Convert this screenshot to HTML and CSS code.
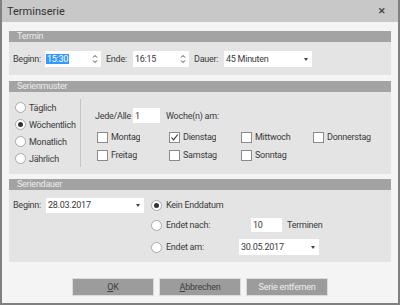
FILE: index.html
```html
<!DOCTYPE html>
<html lang="de">
<head>
    <meta charset="UTF-8">
    <title>Terminserie</title>
    <link rel="stylesheet" href="styles.css">
</head>
<body>
    <div class="window">
        <div class="titlebar">
            <span class="title">Terminserie</span>
            <span class="close">&#x2715;</span>
        </div>

        <div class="content">
            <div class="group">
                <div class="group-head">Termin</div>
                <div class="group-body termin">
                    <span class="lbl lbl-beginn">Beginn:</span>
                    <div class="field time">
                        <span class="selected">15:30</span>
                        <svg class="spin" width="6" height="10" viewBox="0 0 6 10"><path d="M1 3.5 L3 1.5 L5 3.5 M1 6.5 L3 8.5 L5 6.5" fill="none" stroke="#444" stroke-width="1"/></svg>
                    </div>
                    <span class="lbl lbl-ende">Ende:</span>
                    <div class="field time">
                        <span>16:15</span>
                        <svg class="spin" width="6" height="10" viewBox="0 0 6 10"><path d="M1 3.5 L3 1.5 L5 3.5 M1 6.5 L3 8.5 L5 6.5" fill="none" stroke="#444" stroke-width="1"/></svg>
                    </div>
                    <span class="lbl lbl-dauer">Dauer:</span>
                    <div class="field combo dauer">
                        <span>45 Minuten</span>
                        <span class="arrow"></span>
                    </div>
                </div>
            </div>

            <div class="group">
                <div class="group-head">Serienmuster</div>
                <div class="group-body muster">
                    <div class="radios">
                        <label class="radio"><span class="dot"></span>Täglich</label>
                        <label class="radio"><span class="dot on"></span>Wöchentlich</label>
                        <label class="radio"><span class="dot"></span>Monatlich</label>
                        <label class="radio"><span class="dot"></span>Jährlich</label>
                    </div>
                    <div class="weekly">
                        <div class="every">
                            <span class="lbl lbl-jede">Jede/Alle</span>
                            <div class="field interval"><span>1</span></div>
                            <span class="lbl">Woche(n) am:</span>
                        </div>
                        <div class="days">
                            <label class="check"><span class="box"></span><span class="day">Montag</span></label>
                            <label class="check"><span class="box on"><svg width="9" height="9" viewBox="0 0 9 9"><path d="M1.5 4.5 L3.5 6.8 L7.8 1.5" fill="none" stroke="#333" stroke-width="1.1"/></svg></span><span class="day">Dienstag</span></label>
                            <label class="check"><span class="box"></span><span class="day">Mittwoch</span></label>
                            <label class="check"><span class="box"></span><span class="day">Donnerstag</span></label>
                            <label class="check"><span class="box"></span><span class="day">Freitag</span></label>
                            <label class="check"><span class="box"></span><span class="day">Samstag</span></label>
                            <label class="check"><span class="box"></span><span class="day">Sonntag</span></label>
                        </div>
                    </div>
                </div>
            </div>

            <div class="group">
                <div class="group-head">Seriendauer</div>
                <div class="group-body dauer-body">
                    <div class="start">
                        <span class="lbl lbl-start">Beginn:</span>
                        <div class="field combo date-start">
                            <span>28.03.2017</span>
                            <span class="arrow"></span>
                        </div>
                    </div>
                    <div class="ends">
                        <label class="radio end-row r1"><span class="dot on"></span>Kein Enddatum</label>
                        <span></span>
                        <label class="radio end-row r2"><span class="dot"></span>Endet nach:</label>
                        <div class="end-count r2">
                            <div class="field count"><span>10</span></div>
                            <span class="lbl">Terminen</span>
                        </div>
                        <label class="radio end-row r3"><span class="dot"></span>Endet am:</label>
                        <div class="field combo date-end r3">
                            <span>30.05.2017</span>
                            <span class="arrow"></span>
                        </div>
                    </div>
                </div>
            </div>
        </div>

        <div class="buttons">
            <button class="btn dark"><u>O</u>K</button>
            <button class="btn dark"><u>A</u>bbrechen</button>
            <button class="btn">Serie entfernen</button>
        </div>
    </div>
</body>
</html>
```

FILE: styles.css
```css
body {
    margin: 0;
    font-family: Roboto, "Noto Sans", sans-serif;
    font-size: 9px;
    letter-spacing: -0.25px;
    color: #3a3a3a;
}
.window {
    width: 400px;
    height: 305px;
    box-sizing: border-box;
    border: 2px solid #808080;
    border-top: none;
    background-color: #f4f4f4;
}
.titlebar {
    height: 22px;
    background-color: #c8c8c8;
    display: flex;
    align-items: center;
    justify-content: space-between;
    padding: 0 12px 0 5px;
}
.title {
    font-size: 11px;
    letter-spacing: 0;
    color: #333;
}
.close {
    font-size: 9px;
    font-weight: bold;
    color: #444;
}
.content {
    padding: 9px 7px 0 7px;
}
.group + .group {
    margin-top: 6px;
}
.group:last-child {
    margin-top: 5px;
}
.group-head {
    height: 11px;
    line-height: 11px;
    background-color: #a3a3a3;
    color: #ececec;
    padding-left: 8px;
}
.group-body {
    background-color: #e4e4e4;
    box-sizing: border-box;
}
.lbl {
    white-space: nowrap;
}
.field {
    background-color: #fff;
    display: flex;
    align-items: center;
    justify-content: space-between;
    padding: 0 3px 0 2px;
    box-sizing: border-box;
}
.selected {
    background-color: #3399ff;
    color: #fff;
    margin-left: -1px;
    padding: 0 1px;
}
.spin {
    display: block;
}
.arrow {
    width: 0;
    height: 0;
    border-left: 2.5px solid transparent;
    border-right: 2.5px solid transparent;
    border-top: 3px solid #444;
    margin-right: 1px;
}

/* Termin */
.termin {
    height: 33px;
    display: flex;
    align-items: flex-start;
    padding: 9px 0 0 4px;
}
.termin .lbl {
    height: 16px;
    line-height: 16px;
}
.lbl-beginn { width: 32px; }
.lbl-ende { width: 27px; margin-left: 5px; }
.lbl-dauer { width: 30px; margin-left: 5px; }
.time {
    width: 56px;
    height: 16px;
}
.dauer {
    width: 88px;
    height: 16px;
}

/* Serienmuster */
.muster {
    height: 82px;
    display: flex;
    align-items: flex-start;
}
.radios {
    width: 72px;
    padding-left: 6px;
    box-sizing: border-box;
    border-right: 1px solid #c4c4c4;
    margin-top: 7px;
    height: 68px;
}
.radio {
    display: flex;
    align-items: center;
    height: 17px;
    white-space: nowrap;
}
.dot {
    width: 11px;
    height: 11px;
    box-sizing: border-box;
    border: 1px solid #a8a8a8;
    border-radius: 50%;
    background-color: #fff;
    margin-right: 3px;
    display: flex;
    align-items: center;
    justify-content: center;
    flex: none;
}
.dot.on::after {
    content: "";
    width: 5px;
    height: 5px;
    border-radius: 50%;
    background-color: #333;
}
.weekly {
    padding: 16px 0 0 14px;
}
.every {
    display: flex;
    align-items: center;
    height: 15px;
}
.lbl-jede { width: 38px; }
.interval {
    width: 27px;
    height: 15px;
    margin-right: 6px;
}
.days {
    display: grid;
    grid-template-columns: repeat(4, 72px);
    row-gap: 4px;
    margin: 7px 0 0 2px;
}
.check {
    display: flex;
    align-items: center;
    height: 14px;
}
.box {
    width: 11px;
    height: 11px;
    box-sizing: border-box;
    border: 1px solid #8a8a8a;
    background-color: #fff;
    margin-right: 3px;
    display: flex;
    align-items: center;
    justify-content: center;
    flex: none;
}
.box svg {
    display: block;
}
.day {
    height: 12px;
    line-height: 13px;
    overflow: hidden;
}

/* Seriendauer */
.dauer-body {
    height: 72px;
    display: flex;
    align-items: flex-start;
    padding: 8px 0 0 4px;
}
.start {
    display: flex;
    align-items: center;
    height: 14px;
    width: 138px;
}
.lbl-start { width: 33px; }
.date-start {
    width: 98px;
    height: 15px;
}
.ends {
    display: grid;
    grid-template-columns: 88px auto;
    align-items: center;
}
.end-row .dot {
    margin-right: 4px;
}
.r1 { height: 14px; }
.r2 { height: 14px; margin-top: 6px; }
.r3 { height: 16px; margin-top: 7px; }
.end-count {
    display: flex;
    align-items: center;
    margin-left: 12px;
}
.count {
    width: 31px;
    height: 14px;
    margin-right: 5px;
}
.date-end {
    width: 80px;
}

/* Buttons */
.buttons {
    display: flex;
    justify-content: center;
    gap: 5px;
    margin-top: 16px;
}
.btn {
    width: 82px;
    height: 18px;
    background-color: #9c9c9c;
    border: 1px solid #dcdcdc;
    color: #eeeeee;
    font-family: Roboto, "Noto Sans", sans-serif;
    font-size: 9px;
    letter-spacing: -0.25px;
    padding: 0;
}
.btn.dark {
    color: #404040;
}
```
